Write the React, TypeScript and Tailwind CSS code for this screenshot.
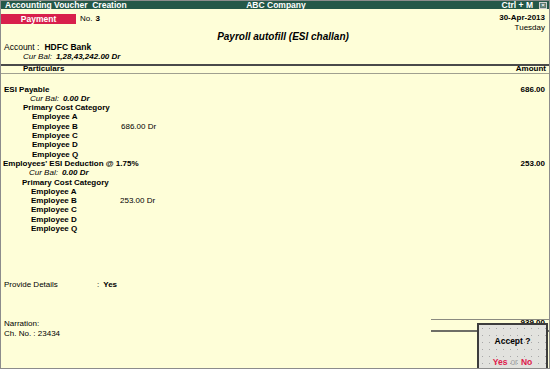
import React from "react";

const Row = ({ children, className = "" }: { children?: React.ReactNode; className?: string }) => (
  <div className={"h-[9.3px] leading-[9.3px] flex items-center whitespace-nowrap " + className}>{children}</div>
);

const Entry = ({ name, amount, bEmp }: { name: string; amount: string; bEmp: string }) => {
  const emps = ["Employee A", "Employee B", "Employee C", "Employee D", "Employee Q"];
  return (
    <>
      <Row className="justify-between pr-[4px]">
        <span className="font-bold">{name}</span>
        <span className="font-bold">{amount}</span>
      </Row>
      <Row className="pl-[26px] italic">
        <span>Cur Bal:</span>
        <span className="font-bold ml-[4px]">0.00 Dr</span>
      </Row>
      <Row className="pl-[19px] font-bold">Primary Cost Category</Row>
      {emps.map((e) => (
        <Row key={e} className="pl-[28px] font-bold">
          <span className="w-[89px]">{e}</span>
          {e === "Employee B" && <span className="font-normal">{bEmp}</span>}
        </Row>
      ))}
    </>
  );
};

export default function App() {
  return (
    <div
      className="relative w-[550px] h-[369px] overflow-hidden bg-[#fefed8] border border-[#8c8c8c] text-[8px] text-black flex flex-col"
      style={{ fontFamily: '"Liberation Sans", Arial, sans-serif' }}
    >
      {/* title bar */}
      <div className="h-[8px] bg-[#245848] text-white font-bold text-[8.5px] flex items-center justify-between pl-[4px] pr-[2px] shrink-0">
        <span className="w-[180px]">Accounting Voucher&nbsp; Creation</span>
        <span>ABC Company</span>
        <span className="w-[180px] flex items-center justify-end gap-[6px]">
          <span>Ctrl + M</span>
          <span className="w-[8px] h-[7px] border border-[#cfcfcf] bg-[#5a7a70] text-[6px] leading-[5px] text-center text-white">×</span>
        </span>
      </div>

      {/* voucher type + date */}
      <div className="flex justify-between mt-[5px] pr-[4px]">
        <div className="flex items-center h-[10px]">
          <div className="w-[75px] h-[10px] bg-[#d81f4c] text-white font-bold text-[8.5px] flex items-center justify-center">
            Payment
          </div>
          <span className="ml-[4px]">No.</span>
          <span className="ml-[3px] font-bold">3</span>
        </div>
        <div className="flex flex-col items-end leading-[10px] -mt-[1px]">
          <span className="font-bold">30-Apr-2013</span>
          <span>Tuesday</span>
        </div>
      </div>

      <div className="text-center font-bold italic text-[10px] leading-[11px] -mt-[2px] pl-[16px]">
        Payroll autofill (ESI challan)
      </div>

      {/* account */}
      <div className="pl-[3px] mt-[1px]">
        <Row className="text-[8.5px]">
          <span>Account :</span>
          <span className="font-bold ml-[5px]">HDFC Bank</span>
        </Row>
        <Row className="pl-[19px] italic">
          <span>Cur Bal:</span>
          <span className="font-bold ml-[4px]">1,28,43,242.00 Dr</span>
        </Row>
      </div>

      {/* table header */}
      <div className="mt-[2px] border-t-2 border-[#4a4a4a] border-b border-b-[#a0a090] flex justify-between h-[10px] items-center font-bold pl-[22px] pr-[3px]">
        <span>Particulars</span>
        <span>Amount</span>
      </div>

      {/* entries */}
      <div className="mt-[11px] pl-[3px]">
        <Entry name="ESI Payable" amount="686.00" bEmp="686.00 Dr" />
      </div>
      <div className="pl-[2px]">
        <Entry name="Employees' ESI Deduction @ 1.75%" amount="253.00" bEmp="253.00 Dr" />
      </div>

      {/* provide details */}
      <div className="mt-[47px] pl-[3px]">
        <Row>
          <span className="w-[93px]">Provide Details</span>
          <span>:</span>
          <span className="ml-[4px] font-bold">Yes</span>
        </Row>
      </div>

      {/* narration + total */}
      <div className="flex justify-between mt-[29px]">
        <div className="pl-[3px] pt-[0px] leading-[10px]">
          <div>Narration:</div>
          <div>Ch. No. : 23434</div>
        </div>
        <div className="w-[118px] flex flex-col">
          <div className="h-[1px] bg-[#8a8a80]" />
          <div className="text-right pr-[4px] font-bold leading-[8px] h-[8px] -mt-[1px] mb-[2px]">939.00</div>
          <div className="h-[2px] bg-[#6e6e66] mt-[1px]" />
        </div>
      </div>

      {/* accept prompt */}
      <div className="absolute right-[1px] bottom-0 w-[71px] h-[45px] border-2 border-b-0 border-[#3c3c3c] bg-[#e2e2de] bg-[radial-gradient(#a8a8a8_0.6px,transparent_0.7px)] bg-[size:7px_7px] flex flex-col items-center">
        <div className="mt-[11px] font-bold text-[8.5px] leading-[10px]">Accept ?</div>
        <div className="mt-[11px] text-[8.5px] leading-[10px] font-bold">
          <span className="text-[#e0204c]">Yes</span>
          <span className="text-[#a0a0a0] font-normal mx-[3px]">or</span>
          <span className="text-[#e0204c]">No</span>
        </div>
      </div>
    </div>
  );
}
